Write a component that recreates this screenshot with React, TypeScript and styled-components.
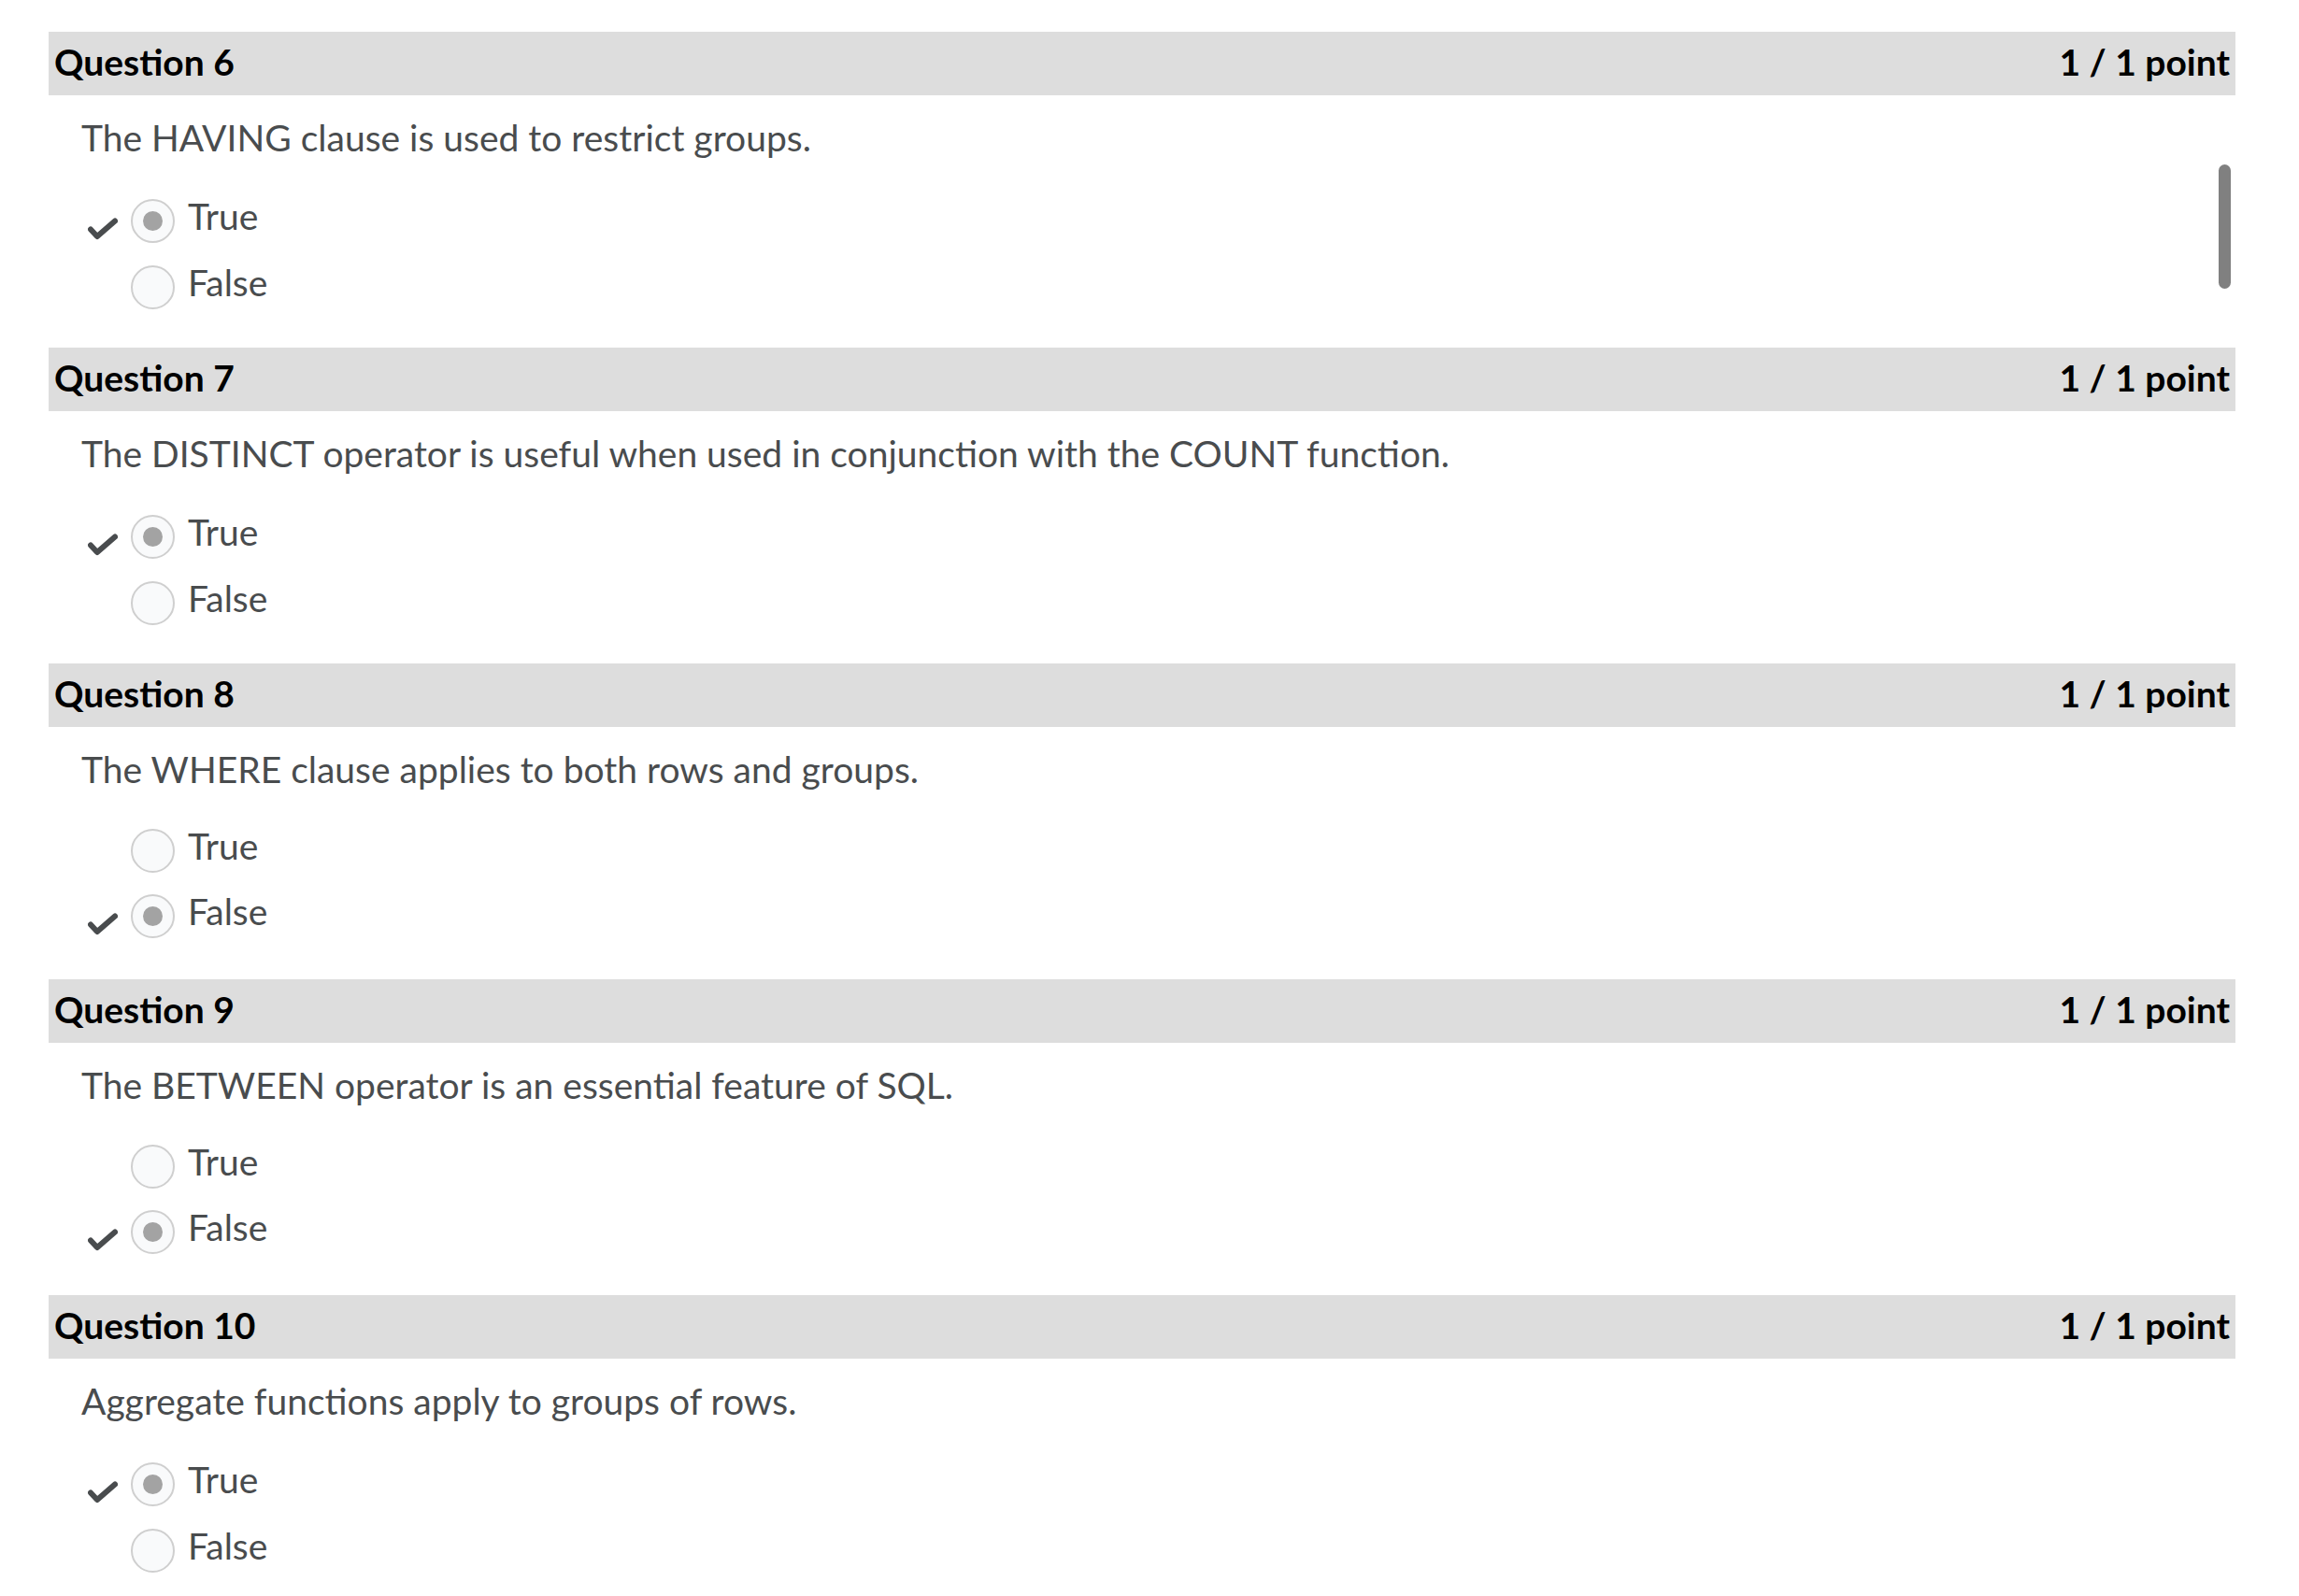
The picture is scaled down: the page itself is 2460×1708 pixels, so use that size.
import React from "react";
import styled, { createGlobalStyle } from "styled-components";

const GlobalStyle = createGlobalStyle`
  html, body {
    margin: 0;
    padding: 0;
    background: #ffffff;
  }
  body {
    font-family: Lato, "Open Sans", sans-serif;
  }
`;

const Page = styled.div`
  position: relative;
  width: 2460px;
  height: 1708px;
  overflow: hidden;
  box-sizing: border-box;
  padding: 34px 68px 0 52px;
  background: #ffffff;
`;

const QuestionBlock = styled.section`
  display: flex;
  flex-direction: column;
  margin-bottom: 23px;
`;

const Header = styled.div`
  display: flex;
  align-items: center;
  justify-content: space-between;
  box-sizing: border-box;
  height: 68px;
  padding: 0 6px 4px 6px;
  background: #dddddd;
  color: #000000;
  font-family: Lato, sans-serif;
  font-weight: 700;
  font-size: 39px;
  line-height: 46px;
`;

const Prompt = styled.p`
  margin: 22px 0 38px 35px;
  font-size: 39px;
  line-height: 46px;
  color: #494c4e;
  font-weight: 400;
`;

const Options = styled.div`
  display: flex;
  flex-direction: column;
`;

const OptionRow = styled.div<{ $marked: boolean }>`
  display: flex;
  align-items: flex-start;
  box-sizing: border-box;
  height: ${(p) => (p.$marked ? "73px" : "68px")};
  padding-top: ${(p) => (p.$marked ? "2px" : "0")};
  padding-left: 42px;
`;

const CheckSlot = styled.div`
  width: 32px;
  height: 24px;
  margin-top: 23px;
  margin-right: 14px;
  flex-shrink: 0;
`;

const Radio = styled.span<{ $checked: boolean }>`
  position: relative;
  display: inline-flex;
  align-items: center;
  justify-content: center;
  box-sizing: border-box;
  width: 47px;
  height: 47px;
  margin-top: 3px;
  margin-right: 14px;
  border-radius: 50%;
  border: 2px solid #cfcfcf;
  background: #f9fafb;
  flex-shrink: 0;
  &::after {
    content: "";
    display: ${(p) => (p.$checked ? "block" : "none")};
    width: 21px;
    height: 21px;
    border-radius: 50%;
    background: #a3a3a3;
  }
`;

const Label = styled.span`
  margin-top: -2px;
  font-size: 39px;
  line-height: 46px;
  color: #494c4e;
`;

const ScrollThumb = styled.div`
  position: absolute;
  left: 2374px;
  top: 176px;
  width: 13px;
  height: 133px;
  border-radius: 7px;
  background: #808080;
`;

const CheckIcon = () => (
  <svg width="32" height="24" viewBox="0 0 32 24">
    <polyline
      points="3,12.5 10,20 29,3.5"
      fill="none"
      stroke="#494c4e"
      strokeWidth="6"
      strokeLinecap="round"
      strokeLinejoin="round"
    />
  </svg>
);

type Q = {
  n: number;
  text: string;
  answer: "True" | "False";
};

const questions: Q[] = [
  { n: 6, text: "The HAVING clause is used to restrict groups.", answer: "True" },
  {
    n: 7,
    text: "The DISTINCT operator is useful when used in conjunction with the COUNT function.",
    answer: "True",
  },
  { n: 8, text: "The WHERE clause applies to both rows and groups.", answer: "False" },
  { n: 9, text: "The BETWEEN operator is an essential feature of SQL.", answer: "False" },
  { n: 10, text: "Aggregate functions apply to groups of rows.", answer: "True" },
];

export default function App() {
  return (
    <>
      <GlobalStyle />
      <Page>
        {questions.map((q) => (
          <QuestionBlock key={q.n}>
            <Header>
              <span>Question {q.n}</span>
              <span>1 / 1 point</span>
            </Header>
            <Prompt>{q.text}</Prompt>
            <Options>
              {(["True", "False"] as const).map((opt) => {
                const marked = q.answer === opt;
                return (
                  <OptionRow key={opt} $marked={marked}>
                    <CheckSlot>{marked ? <CheckIcon /> : null}</CheckSlot>
                    <Radio $checked={marked} />
                    <Label>{opt}</Label>
                  </OptionRow>
                );
              })}
            </Options>
          </QuestionBlock>
        ))}
        <ScrollThumb />
      </Page>
    </>
  );
}
